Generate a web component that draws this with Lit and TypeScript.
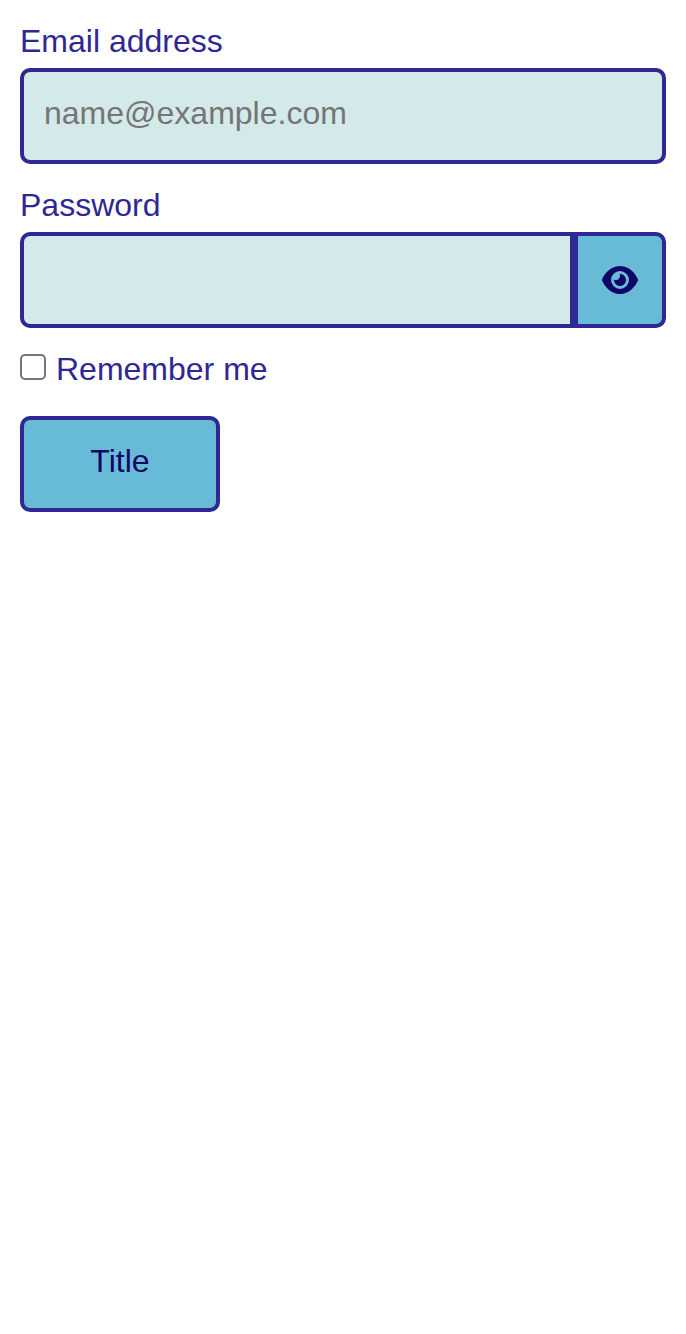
import { LitElement, html, css } from "lit";
import { customElement } from "lit/decorators.js";

@customElement("app-root")
export class AppRoot extends LitElement {
  static styles = css`
    :host {
      display: block;
      box-sizing: border-box;
      min-height: 1334px;
      padding: 20px;
      background: #fff;
      color: #2f2793;
      font: 32px/44px "Liberation Sans", Arial, sans-serif;
    }
    * { box-sizing: border-box; }
    form { display: flex; flex-direction: column; }
    label { display: block; height: 44px; line-height: 42px; }
    .field { margin-bottom: 20px; }
    .control { display: flex; height: 96px; margin-top: 4px; }
    input, button { font: inherit; margin: 0; outline: none; }
    .input {
      flex: 1;
      min-width: 0;
      height: 96px;
      padding: 0 20px 6px;
      border: 4px solid #2f2793;
      border-radius: 10px;
      background: #d4e9ea;
      color: #2f2793;
    }
    .input::placeholder { color: #757575; opacity: 1; }
    .joined { border-radius: 10px 0 0 10px; }
    .toggle {
      display: flex;
      align-items: center;
      justify-content: center;
      width: 92px;
      height: 96px;
      padding: 0;
      border: 4px solid #2f2793;
      border-radius: 0 10px 10px 0;
      background: #68bbd6;
      color: #0f0667;
    }
    .toggle svg { display: block; width: 36px; height: 32px; }
    .remember { display: flex; height: 44px; margin-bottom: 24px; }
    .check {
      appearance: none;
      width: 26px;
      height: 26px;
      margin: 6px 10px 0 0;
      border: 2px solid #767676;
      border-radius: 5px;
      background: #fff;
    }
    .submit {
      width: 200px;
      height: 96px;
      padding: 0 0 6px;
      border: 4px solid #2f2793;
      border-radius: 10px;
      background: #68bbd6;
      color: #0f0667;
    }
  `;

  render() {
    return html`
      <form>
        <div class="field">
          <label for="email">Email address</label>
          <div class="control">
            <input class="input" id="email" type="email" placeholder="name@example.com" />
          </div>
        </div>
        <div class="field">
          <label for="password">Password</label>
          <div class="control">
            <input class="input joined" id="password" type="password" />
            <button class="toggle" type="button" aria-label="Show password">
              <svg viewBox="0 0 576 512" fill="currentColor">
                <path d="M288 32c-80.8 0-145.5 36.8-192.6 80.6C48.6 156 17.3 208 2.5 243.7c-3.3 7.9-3.3 16.7 0 24.6C17.3 304 48.6 356 95.4 399.4C142.500 443.200 207.200 480 288 480s145.500-36.800 192.600-80.600c46.800-43.500 78.100-95.400 93-131.100c3.300-7.900 3.300-16.700 0-24.600c-14.900-35.700-46.200-87.700-93-131.100C433.500 68.800 368.800 32 288 32zM144 256a144 144 0 1 1 288 0 144 144 0 1 1-288 0zm144-64c0 35.300-28.700 64-64 64c-7.100 0-13.900-1.200-20.300-3.300c-5.500-1.800-11.900 1.600-11.700 7.400c.3 6.900 1.300 13.800 3.200 20.700c13.700 51.200 66.400 81.600 117.600 67.900s81.600-66.400 67.900-117.600c-11.100-41.500-47.800-69.400-88.600-71.100c-5.800-.2-9.200 6.100-7.400 11.700c2.100 6.400 3.300 13.200 3.300 20.300z"/>
              </svg>
            </button>
          </div>
        </div>
        <div class="remember">
          <input class="check" id="remember" type="checkbox" />
          <label for="remember">Remember me</label>
        </div>
        <button class="submit" type="button">Title</button>
      </form>
    `;
  }
}
